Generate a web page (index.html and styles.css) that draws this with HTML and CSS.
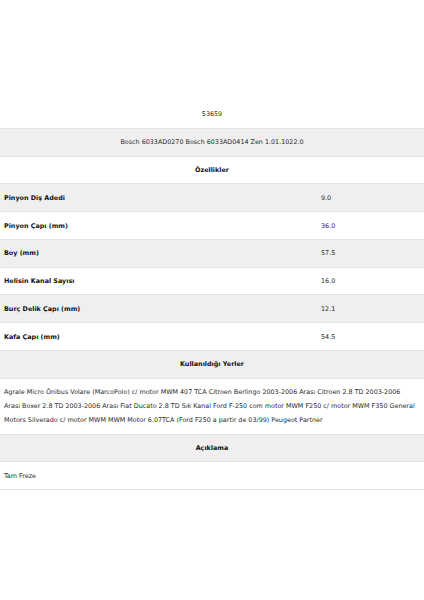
FILE: index.html
```html
<!DOCTYPE html>
<html lang="tr">
<head>
<meta charset="utf-8">
<link rel="stylesheet" href="styles.css">
</head>
<body>
<table class="spec">
  <tr class="row"><td class="center" colspan="2">53659</td></tr>
  <tr class="row alt"><td class="center" colspan="2">Bosch 6033AD0270 Bosch 6033AD0414 Zen 1.01.1022.0</td></tr>
  <tr class="row"><th class="center head" colspan="2">Özellikler</th></tr>
  <tr class="row alt"><td class="label">Pinyon Diş Adedi</td><td class="value">9.0</td></tr>
  <tr class="row"><td class="label">Pinyon Çapı (mm)</td><td class="value">36.0</td></tr>
  <tr class="row alt"><td class="label">Boy (mm)</td><td class="value">57.5</td></tr>
  <tr class="row"><td class="label">Helisin Kanal Sayısı</td><td class="value">16.0</td></tr>
  <tr class="row alt"><td class="label">Burç Delik Çapı (mm)</td><td class="value">12.1</td></tr>
  <tr class="row"><td class="label">Kafa Çapı (mm)</td><td class="value">54.5</td></tr>
  <tr class="row alt"><th class="center head" colspan="2">Kullanıldığı Yerler</th></tr>
  <tr class="row"><td class="text" colspan="2">Agrale Micro Ônibus Volare (MarcoPolo) c/ motor MWM 407 TCA Citroen Berlingo 2003-2006 Arası Citroen 2.8 TD 2003-2006 Arası Boxer 2.8 TD 2003-2006 Arası Fiat Ducato 2.8 TD Sık Kanal Ford F-250 com motor MWM F250 c/ motor MWM F350 General Motors Silverado c/ motor MWM MWM Motor 6.07TCA (Ford F250 a partir de 03/99) Peugeot Partner</td></tr>
  <tr class="row alt"><th class="center head" colspan="2">Açıklama</th></tr>
  <tr class="row"><td class="text" colspan="2">Tam Freze</td></tr>
</table>
</body>
</html>
```
FILE: styles.css
```css
html, body {
  margin: 0;
  padding: 0;
  background: #fff;
}
body {
  font-family: "DejaVu Sans", "Open Sans", sans-serif;
  font-size: 6.4px;
  color: #2a2a2a;
}
.spec {
  width: 100%;
  margin-top: 101px;
  border-collapse: collapse;
}
.row td, .row th {
  padding: 6.4px 4px;
  line-height: 14px;
  border-bottom: 1px solid #e4e4e4;
  text-align: left;
  font-weight: normal;
}
.row.alt {
  background: #efefef;
}
.row .center {
  text-align: center;
}
.row .head {
  font-weight: bold;
  color: #111;
}
.row .label {
  width: 75%;
  font-weight: bold;
  color: #111;
}
.row .value {
  padding-left: 3px;
}
.row .text {
  padding-right: 8px;
}
```
